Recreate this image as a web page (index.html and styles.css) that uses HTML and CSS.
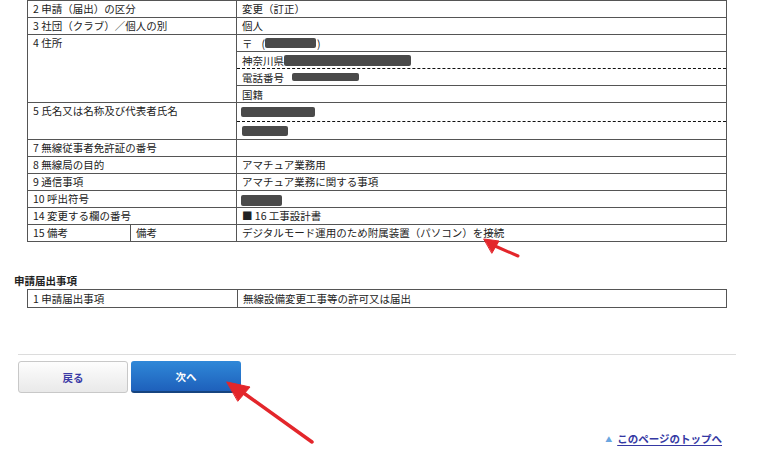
FILE: index.html
```html
<!DOCTYPE html>
<html lang="ja">
<head>
    <meta charset="UTF-8">
    <meta name="viewport" content="width=device-width, initial-scale=1.0">
    <title>申請内容の確認</title>
    <link rel="stylesheet" href="styles.css">
</head>
<body>
    <div class="page">
        <table class="form-table">
            <colgroup>
                <col class="col-a">
                <col class="col-b">
                <col>
            </colgroup>
            <tr>
                <td colspan="2">2 申請（届出）の区分</td>
                <td>変更（訂正）</td>
            </tr>
            <tr>
                <td colspan="2">3 社団（クラブ）／個人の別</td>
                <td>個人</td>
            </tr>
            <tr>
                <td colspan="2" class="top">4 住所</td>
                <td class="multi">
                    <div class="sub">〒 <span class="paren">(</span><span class="redact r-zip"></span>)</div>
                    <div class="sub">神奈川県<span class="redact r-addr"></span></div>
                    <div class="sub dashed">電話番号<span class="redact r-tel"></span></div>
                    <div class="sub">国籍</div>
                </td>
            </tr>
            <tr>
                <td colspan="2" class="top">5 氏名又は名称及び代表者氏名</td>
                <td class="multi">
                    <div class="sub tall"><span class="redact r-name"></span></div>
                    <div class="sub tall dashed"><span class="redact r-kana"></span></div>
                </td>
            </tr>
            <tr>
                <td colspan="2">7 無線従事者免許証の番号</td>
                <td></td>
            </tr>
            <tr>
                <td colspan="2">8 無線局の目的</td>
                <td>アマチュア業務用</td>
            </tr>
            <tr>
                <td colspan="2">9 通信事項</td>
                <td>アマチュア業務に関する事項</td>
            </tr>
            <tr>
                <td colspan="2">10 呼出符号</td>
                <td><span class="redact r-call"></span></td>
            </tr>
            <tr>
                <td colspan="2">14 変更する欄の番号</td>
                <td>■ 16 工事設計書</td>
            </tr>
            <tr>
                <td>15 備考</td>
                <td>備考</td>
                <td>デジタルモード運用のため附属装置（パソコン）を接続</td>
            </tr>
        </table>

        <h3 class="section-title">申請届出事項</h3>
        <table class="form-table small">
            <colgroup>
                <col class="col-label">
                <col>
            </colgroup>
            <tr>
                <td>1 申請届出事項</td>
                <td>無線設備変更工事等の許可又は届出</td>
            </tr>
        </table>

        <hr class="divider">

        <div class="actions">
            <button class="btn btn-back">戻る</button>
            <button class="btn btn-next">次へ</button>
        </div>

        <div class="pagetop">
            <a href="#"><span class="tri">▲</span><span class="pagetop-text">このページのトップへ</span></a>
        </div>

        <!-- annotation arrows drawn over the screenshot -->
        <svg class="marks" width="780" height="459" viewBox="0 0 780 459">
            <g fill="#e3262b" stroke="#e3262b" stroke-linecap="round">
                <line x1="518" y1="256" x2="495" y2="246" stroke-width="3"/>
                <polygon points="484,239 499,241 492,253" stroke-width="1"/>
                <line x1="312" y1="442" x2="245" y2="394" stroke-width="3.5"/>
                <polygon points="227,382 250,387 238,401" stroke-width="1"/>
            </g>
        </svg>
    </div>
</body>
</html>
```

FILE: styles.css
```css
body {
    margin: 0;
    background: #fff;
    font-family: "Noto Sans CJK JP", "Noto Sans", sans-serif;
    font-size: 10.5px;
    color: #222;
}

.page {
    position: relative;
    width: 780px;
    height: 459px;
    padding-left: 14px;
    box-sizing: border-box;
    overflow: hidden;
}

.form-table {
    width: 700px;
    margin-left: 13px;
    border-collapse: collapse;
    table-layout: fixed;
    border: 1px solid #555;
}

.form-table td {
    border: 1px solid #555;
    height: 16px;
    line-height: 16px;
    padding: 0 5px;
    white-space: nowrap;
    overflow: hidden;
}

.form-table td.top {
    vertical-align: top;
}

.form-table td.multi {
    padding: 0;
}

.col-a {
    width: 103px;
}

.col-b {
    width: 106px;
}

.col-label {
    width: 210px;
}

.sub {
    height: 17px;
    line-height: 17px;
    padding: 0 5px;
    box-sizing: border-box;
    display: flex;
    align-items: center;
}

.sub:first-child {
    height: 16px;
}

.sub + .sub {
    border-top: 1px solid #555;
}

.sub.dashed {
    border-top: 1px dashed #111;
}

.sub.tall {
    height: 18px;
}

.redact {
    display: inline-block;
    background: #4a4a4a;
    border-radius: 2px;
    height: 10px;
    vertical-align: middle;
}

.paren {
    margin-left: 9px;
}

.r-zip {
    width: 51px;
    margin-right: 1px;
}

.r-addr {
    width: 127px;
    height: 11px;
}

.r-tel {
    width: 67px;
    height: 8px;
    margin-left: 8px;
}

.r-name {
    width: 74px;
    margin-left: -1px;
}

.r-kana {
    width: 46px;
}

.r-call {
    width: 41px;
    height: 11px;
    margin-left: -1px;
}

.section-title {
    margin: 32px 0 1px;
    font-size: 10.5px;
    line-height: 14px;
    font-weight: bold;
}

.form-table.small td {
    height: 17px;
    line-height: 17px;
}

.divider {
    width: 718px;
    margin: 46px 0 0 4px;
    border: none;
    border-top: 1px solid #dcdcdc;
    height: 0;
}

.actions {
    display: flex;
    gap: 3px;
    margin: 6px 0 0 4px;
}

.btn {
    width: 110px;
    height: 32px;
    border-radius: 3px;
    font-family: inherit;
    font-size: 10.5px;
    font-weight: bold;
    cursor: pointer;
}

.btn-back {
    background: linear-gradient(#fdfdfd, #e9e9e9);
    border: 1px solid #c8c8c8;
    color: #3b3ba6;
}

.btn-next {
    background: linear-gradient(#2f88d8, #1e60bb);
    border: none;
    border-bottom: 2px solid #16447f;
    color: #fff;
}

.pagetop {
    width: 708px;
    margin-top: 39px;
    text-align: right;
    line-height: 14px;
}

.pagetop a {
    color: #3438a3;
    font-weight: bold;
    text-decoration: none;
}

.pagetop-text {
    text-decoration: underline;
    text-underline-offset: 2px;
}

.tri {
    color: #6aa6e0;
    font-size: 7px;
    margin-right: 5px;
    vertical-align: 1px;
}

.marks {
    position: absolute;
    top: 0;
    left: 0;
    pointer-events: none;
}
```
